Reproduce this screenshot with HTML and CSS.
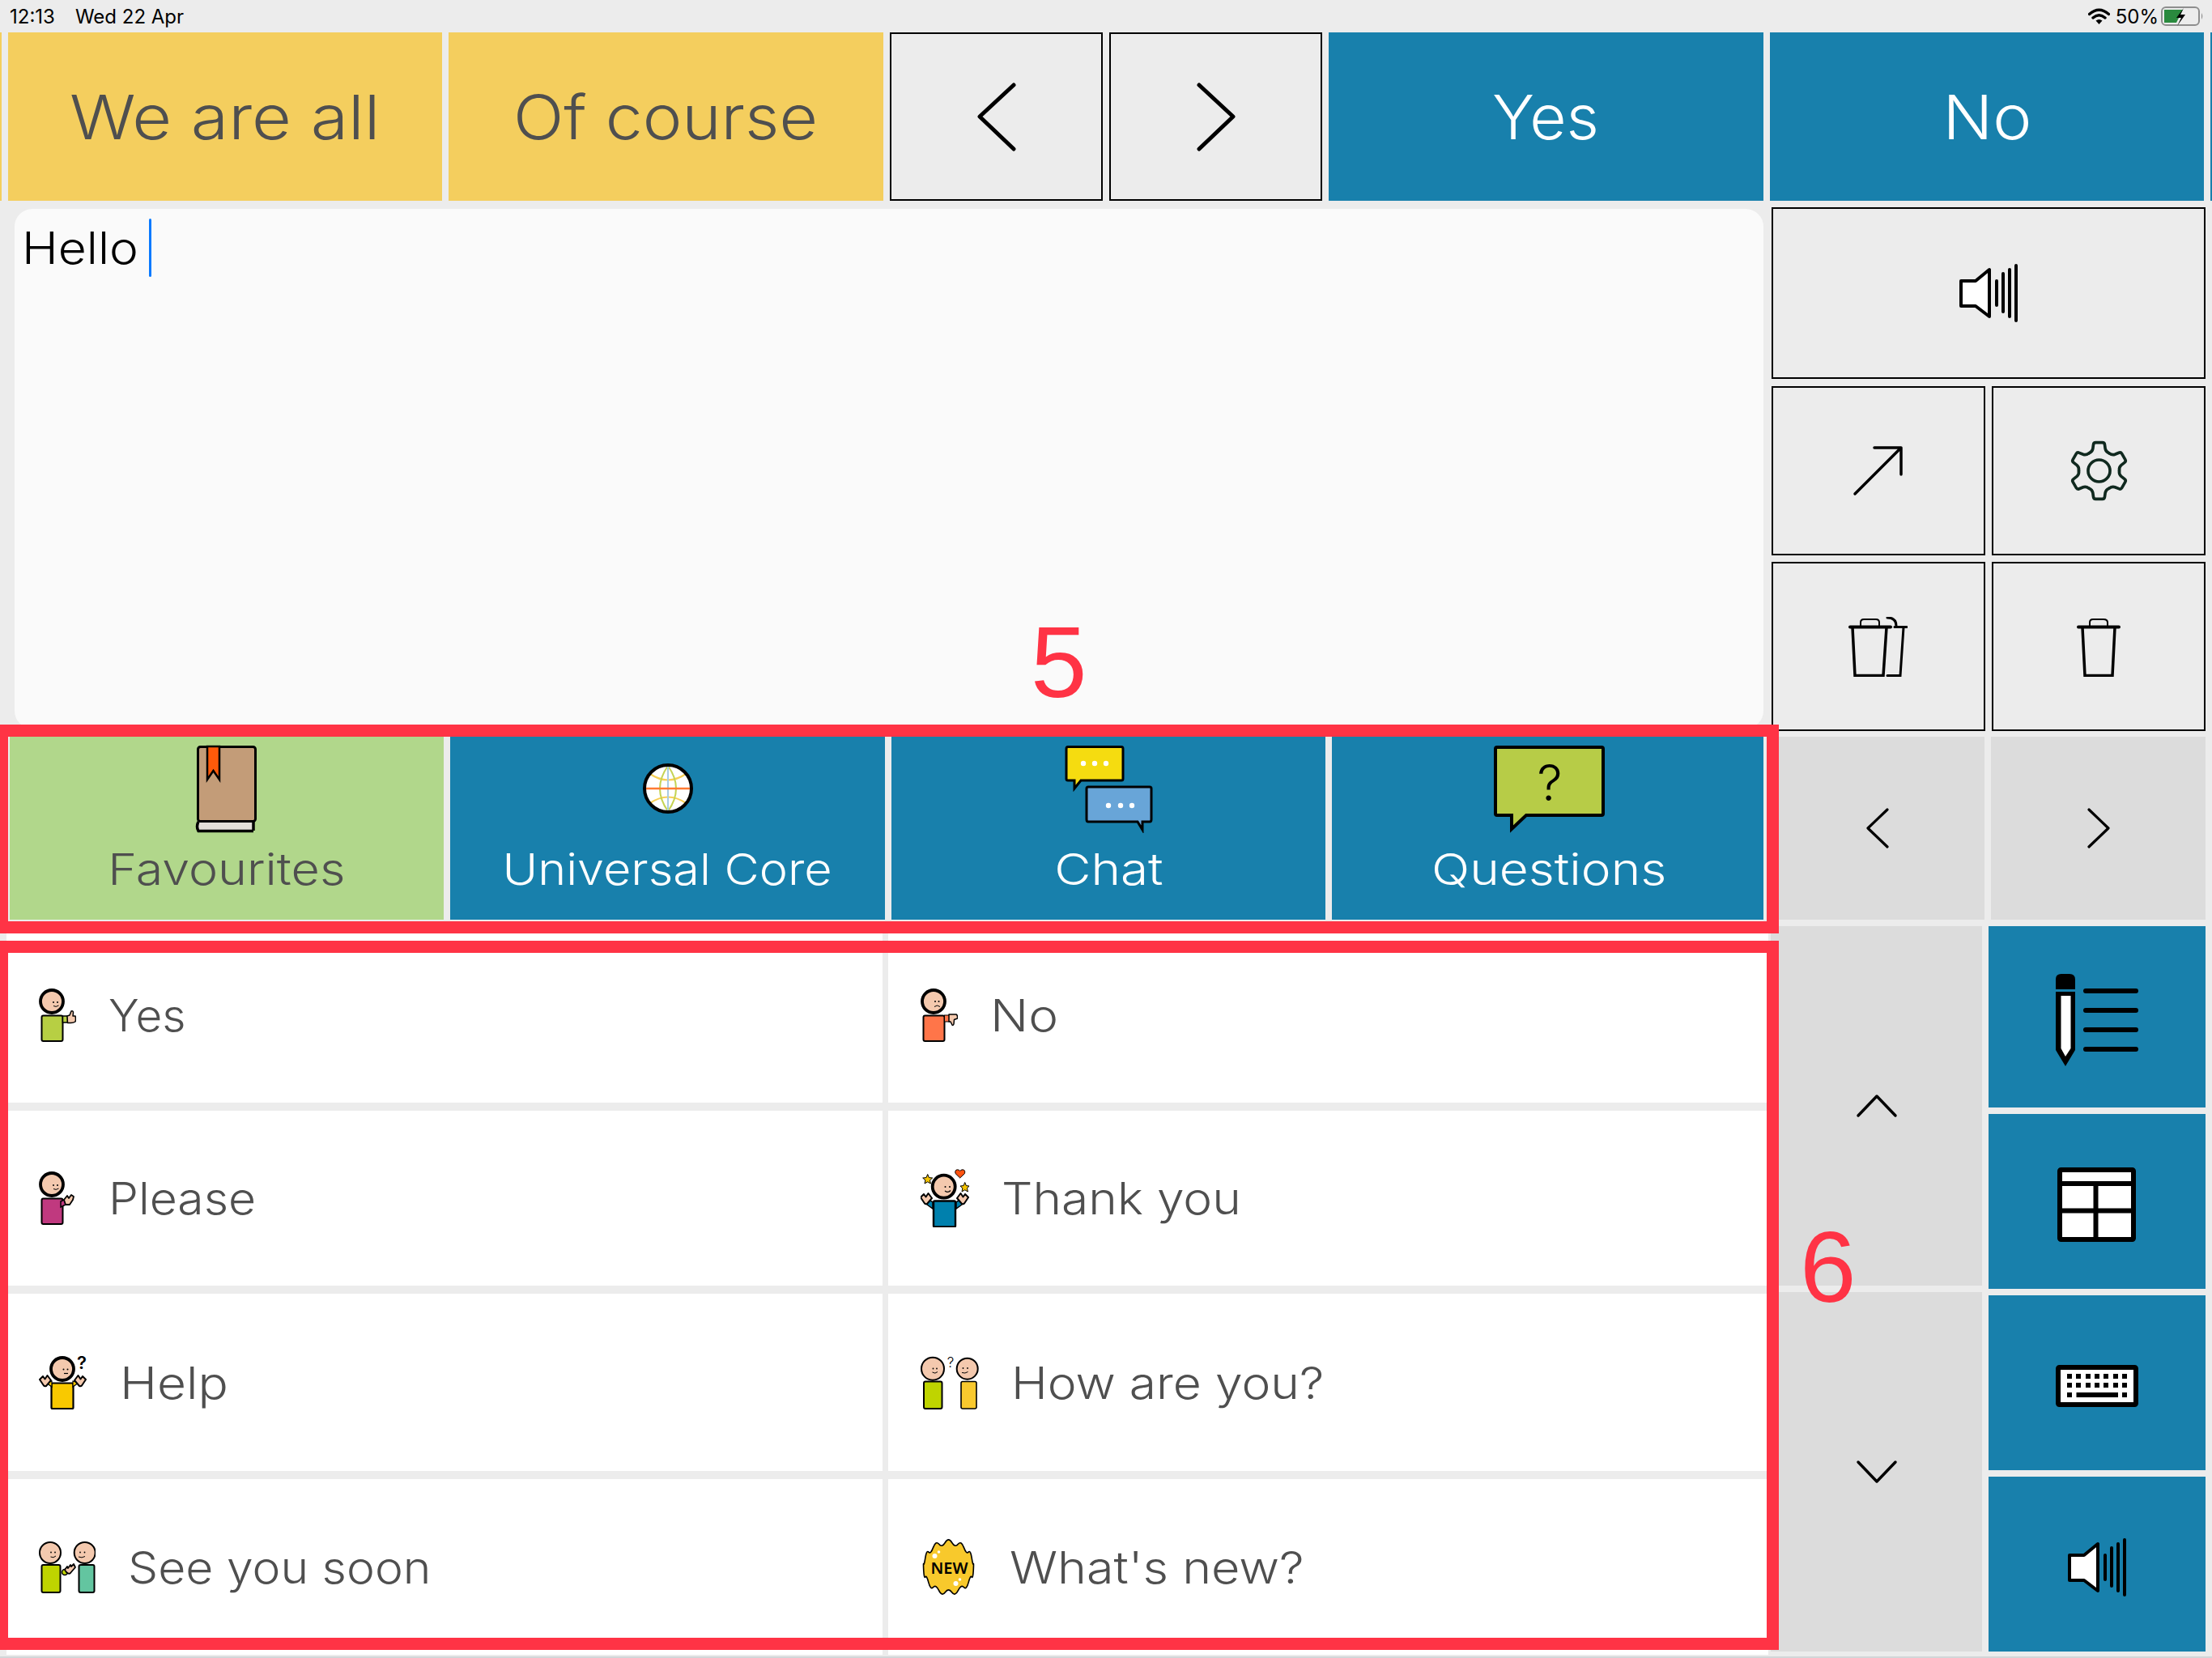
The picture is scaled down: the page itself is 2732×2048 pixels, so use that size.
FILE: index.html
```html
<!DOCTYPE html>
<html lang="en">
<head>
<meta charset="utf-8">
<title>Talk board</title>
<link rel="stylesheet" href="styles.css">
</head>
<body>
<div class="app">
  <header class="status">
    <div class="status-left"><span>12:13</span><span>Wed 22 Apr</span></div>
    <div class="status-right">
      <svg class="wifi" width="27" height="20" viewBox="0 0 27 20"><path d="M1.5 7.5Q13.5-3 25.500 7.500M6 12Q13.500 5.500 21 12" fill="none" stroke="#000" stroke-width="3.400" stroke-linecap="round"/><path d="M9.500 15.500Q13.500 12.500 17.500 15.500L13.500 20Z" fill="#000"/></svg>
      <span>50%</span>
      <svg class="battery" width="53" height="26" viewBox="0 0 53 26"><rect x="1" y="2" width="46" height="22" rx="5" fill="none" stroke="#8e8e8e" stroke-width="2"/><path d="M4 5H27L19 21H4Z" fill="#2a8a3e"/><path d="M28 3L19 15H25L20 25L30 11H24Z" fill="#000"/><path d="M50 9Q52.500 13 50 17Z" fill="#8e8e8e"/></svg>
    </div>
  </header>

  <section class="toprow">
    <div class="sliver sliver-yellow"></div>
    <button class="quick quick-yellow"><span class="sx-111">We are all</span></button>
    <button class="quick quick-yellow"><span class="sx-108">Of course</span></button>
    <button class="quick quick-nav"><svg width="50" height="85" viewBox="0 0 50 85"><path d="M46 3L4 42L46 82" fill="none" stroke="#000" stroke-width="5" stroke-linecap="round" stroke-linejoin="round"/></svg></button>
    <button class="quick quick-nav"><svg width="50" height="85" viewBox="0 0 50 85"><path d="M4 3L46 42L4 82" fill="none" stroke="#000" stroke-width="5" stroke-linecap="round" stroke-linejoin="round"/></svg></button>
    <button class="quick quick-blue"><span class="sx-103">Yes</span></button>
    <button class="quick quick-blue"><span class="sx-107">No</span></button>
    <div class="sliver sliver-blue"></div>
  </section>

  <main class="main">
    <div class="left">
      <div class="editor"><span class="editor-text sx-110">Hello</span><span class="caret"></span></div>

      <nav class="tabs">
        <button class="tab tab-green">
          <span class="tab-icon"><svg width="78" height="110" viewBox="0 0 78 110"><path d="M4 96H72V108H4Z" fill="#e3dfd9"/><path d="M4 96Q1 102 4 107.500H72M72 96V107" fill="none" stroke="#000" stroke-width="3.500"/><rect x="3.500" y="3.500" width="71" height="92" rx="3" fill="#c39c78" stroke="#000" stroke-width="3"/><path d="M15 3V44L22.500 33L30 44V3Z" fill="#ff5a0a" stroke="#000" stroke-width="2.500"/></svg></span>
          <span class="tab-label sx-113">Favourites</span>
        </button>
        <button class="tab tab-blue">
          <span class="tab-icon"><svg width="64" height="66" viewBox="0 0 64 66"><circle cx="32" cy="33" r="29" fill="#fff"/><path d="M10 15Q32 30 54 15M10 51Q32 36 54 51" fill="none" stroke="#f7cf55" stroke-width="2.200"/><path d="M32 5Q12 33 32 61M32 5Q52 33 32 61" fill="none" stroke="#c5d353" stroke-width="2"/><path d="M32 5V61" stroke="#a9cbe3" stroke-width="2"/><path d="M4 33H60" stroke="#ff7a33" stroke-width="2.500"/><circle cx="32" cy="33" r="29" fill="none" stroke="#000" stroke-width="4"/></svg></span>
          <span class="tab-label sx-110">Universal Core</span>
        </button>
        <button class="tab tab-blue">
          <span class="tab-icon"><svg width="112" height="110" viewBox="0 0 112 110"><path d="M6 3.500H72Q74 3.500 74 6V43Q74 45 72 45H22L14 55V45H6Q4 45 4 43V6Q4 3.500 6 3.500Z" fill="#f5dc10" stroke="#000" stroke-width="3"/><g fill="#fff"><circle cx="25" cy="24" r="3.200"/><circle cx="39" cy="24" r="3.200"/><circle cx="53" cy="24" r="3.200"/></g><path d="M31 53H107Q109 53 109 55V93Q109 96 107 96H98V106L92 96H31Q29 96 29 93V55Q29 53 31 53Z" fill="#68a5d8" stroke="#000" stroke-width="3"/><g fill="#fff"><circle cx="56" cy="76" r="3.200"/><circle cx="71" cy="76" r="3.200"/><circle cx="85" cy="76" r="3.200"/></g></svg></span>
          <span class="tab-label sx-115">Chat</span>
        </button>
        <button class="tab tab-blue">
          <span class="tab-icon tab-icon-q"><svg width="142" height="110" viewBox="0 0 142 110"><path d="M6 4H135Q137 4 137 6V86Q137 88 135 88H42L24 105V88H6Q4 88 4 86V6Q4 4 6 4Z" fill="#b7cc47" stroke="#000" stroke-width="4"/><text class="svg-q" x="71" y="70" text-anchor="middle">?</text></svg></span>
          <span class="tab-label tab-label-q sx-115">Questions</span>
        </button>
      </nav>

      <section class="phrases">
        <div class="phrase">
          <svg width="46" height="66" viewBox="0 0 46 66"><rect x="3.500" y="33.500" width="26" height="31.500" rx="2" fill="#b7cf43" stroke="#000" stroke-width="2"/><rect x="29.500" y="34" width="6" height="8" fill="#b7cf43" stroke="#000" stroke-width="1.500"/><path d="M35 34L38 33L40 28Q42.500 27 42.500 30L42 34H45Q46 38 45 41Q42 43 38 42.500H35.500Z" fill="#f4c9ae" stroke="#000" stroke-width="1.500" stroke-linejoin="round"/><circle cx="16" cy="16" r="14" fill="#f4c9ae" stroke="#000" stroke-width="3.800"/><circle cx="18" cy="17" r="1" fill="#000"/><circle cx="23" cy="17" r="1" fill="#000"/><path d="M18 21.500Q21 23.500 24.500 21" fill="none" stroke="#000" stroke-width="1"/></svg>
          <span class="sx-103">Yes</span>
        </div>
        <div class="phrase">
          <svg width="46" height="66" viewBox="0 0 46 66"><rect x="3.500" y="33.500" width="26" height="31.500" rx="2" fill="#ff7549" stroke="#000" stroke-width="2"/><rect x="29.500" y="33" width="6" height="8" fill="#ff7549" stroke="#000" stroke-width="1"/><path d="M35 32H44Q46 33 45.500 37L41.500 38.500L41 44Q39.500 47 38.500 44L37 41H35Z" fill="#f4c9ae" stroke="#000" stroke-width="1.500" stroke-linejoin="round"/><circle cx="16" cy="16" r="14" fill="#f4c9ae" stroke="#000" stroke-width="3.800"/><circle cx="18" cy="16" r="1" fill="#000"/><circle cx="22.500" cy="16" r="1" fill="#000"/><path d="M17 22.500Q20.500 19.500 24 22.500" fill="none" stroke="#000" stroke-width="1"/></svg>
          <span class="sx-113">No</span>
        </div>
        <div class="phrase">
          <svg width="46" height="66" viewBox="0 0 46 66"><rect x="3.500" y="33.500" width="26" height="31.500" rx="2" fill="#c0397f" stroke="#000" stroke-width="2"/><path d="M27 37L33 34V41L27 44Z" fill="#c0397f" stroke="#000" stroke-width="1.500"/><path d="M31 35L35 30L37 33L40 29L43 31L42 35L38 41L33 41Z" fill="#f4c9ae" stroke="#000" stroke-width="1.800" stroke-linejoin="round"/><circle cx="16" cy="16" r="14" fill="#f4c9ae" stroke="#000" stroke-width="3.800"/><circle cx="18" cy="17" r="1" fill="#000"/><circle cx="23" cy="17" r="1" fill="#000"/><path d="M18 21.500Q21 23.500 24.500 21" fill="none" stroke="#000" stroke-width="1"/></svg>
          <span class="sx-107">Please</span>
        </div>
        <div class="phrase">
          <svg width="60" height="72" viewBox="0 0 60 72"><rect x="16" y="39.500" width="27" height="32" rx="1.500" fill="#0080ad" stroke="#000" stroke-width="2.400"/><path d="M8 44L15 49V41L9 37Z" fill="#0080ad" stroke="#000" stroke-width="1.500"/><path d="M51 44L44 49V41L50 37Z" fill="#0080ad" stroke="#000" stroke-width="1.500"/><g fill="#f4c9ae" stroke="#000" stroke-width="2" stroke-linejoin="round"><path transform="translate(7 36)" d="M-7-1L-3-5L-.5-1.500L2.500-6L7 0L1 7Q-1 7.500-2 6.500Z"/><path transform="translate(52 36) scale(-1 1)" d="M-7-1L-3-5L-.5-1.500L2.500-6L7 0L1 7Q-1 7.500-2 6.500Z"/></g><circle cx="28.700" cy="21.700" r="14" fill="#f4c9ae" stroke="#000" stroke-width="3.800"/><circle cx="30.500" cy="22" r="1" fill="#000"/><circle cx="36" cy="22" r="1" fill="#000"/><path d="M30 27Q34 30 37 26.500" fill="none" stroke="#000" stroke-width="1.200"/><g fill="#f5c400" stroke="#000" stroke-width="1"><path d="M8.700 6.500L10.400 10.600L14.700 11L11.500 13.800L12.400 18L8.700 15.800L5 18L5.900 13.800L2.700 11L7 10.600Z"/><path d="M54.700 16.500L56.400 20.600L60 21L57.500 23.800L58.400 28L54.700 25.800L51 28L51.900 23.800L49 21L53 20.600Z"/></g><path d="M48.700 11L43 5.500Q42 1 45.500 .8Q48 .8 48.700 2.500Q49.500 .8 52 .8Q55.500 1 54.500 5.500Z" fill="#ff5310" stroke="#000" stroke-width="1"/></svg>
          <span class="sx-110">Thank you</span>
        </div>
        <div class="phrase">
          <svg width="60" height="82" viewBox="0 -8 60 82"><rect x="15.500" y="33.500" width="27" height="31.500" rx="1.500" fill="#f9c900" stroke="#000" stroke-width="2.200"/><path d="M9 33L16 38V31Z" fill="#f9c900" stroke="#000" stroke-width="1.200"/><path d="M49 33L42 38V31Z" fill="#f9c900" stroke="#000" stroke-width="1.200"/><g fill="#f4c9ae" stroke="#000" stroke-width="2" stroke-linejoin="round"><path transform="translate(8 30)" d="M-7-1L-3-5L-.5-1.500L2.500-6L7 0L1 7Q-1 7.500-2 6.500Z"/><path transform="translate(51 30) scale(-1 1)" d="M-7-1L-3-5L-.5-1.500L2.500-6L7 0L1 7Q-1 7.500-2 6.500Z"/></g><circle cx="29" cy="16" r="14" fill="#f4c9ae" stroke="#000" stroke-width="3.800"/><circle cx="30.500" cy="16.500" r="1" fill="#000"/><circle cx="35.500" cy="16.500" r="1" fill="#000"/><path d="M31 21.500H36" stroke="#000" stroke-width="1.200"/><text class="svg-mark" x="53" y="16" text-anchor="middle">?</text></svg>
          <span class="sx-113">Help</span>
        </div>
        <div class="phrase">
          <svg width="72" height="82" viewBox="0 -8 72 82"><rect x="4" y="31.500" width="22.500" height="33.500" rx="2" fill="#bfd400" stroke="#000" stroke-width="2"/><rect x="50" y="31.500" width="19" height="33.500" rx="2" fill="#f9c92e" stroke="#000" stroke-width="1.600"/><circle cx="15" cy="15.700" r="14" fill="#f4c9ae" stroke="#000" stroke-width="2"/><circle cx="57.700" cy="15.700" r="13" fill="#f4c9ae" stroke="#000" stroke-width="2"/><circle cx="15.500" cy="15.500" r=".9" fill="#000"/><circle cx="20" cy="15.500" r=".9" fill="#000"/><path d="M14.500 20Q18 22.500 21 19.500" fill="none" stroke="#000" stroke-width="1"/><circle cx="52.500" cy="15" r=".9" fill="#000"/><circle cx="58" cy="15" r=".9" fill="#000"/><path d="M51 20.500Q55 22 58.500 19.500" fill="none" stroke="#000" stroke-width="1"/><text class="svg-mark-thin" x="37" y="14" text-anchor="middle">?</text></svg>
          <span class="sx-110">How are you?</span>
        </div>
        <div class="phrase">
          <svg width="70" height="64" viewBox="0 0 70 64"><rect x="3.500" y="29" width="23" height="34" rx="2" fill="#bfd400" stroke="#000" stroke-width="2"/><rect x="49.500" y="29" width="19" height="34" rx="2" fill="#63c5a0" stroke="#000" stroke-width="2"/><circle cx="14" cy="14" r="13" fill="#f4c9ae" stroke="#000" stroke-width="2"/><circle cx="56.700" cy="14" r="13" fill="#f4c9ae" stroke="#000" stroke-width="2"/><circle cx="15" cy="13.500" r=".9" fill="#000"/><circle cx="20" cy="13.500" r=".9" fill="#000"/><path d="M14.500 19Q18 21 21 18" fill="none" stroke="#000" stroke-width="1"/><circle cx="51" cy="13.500" r=".9" fill="#000"/><circle cx="56.500" cy="13.500" r=".9" fill="#000"/><path d="M49 19Q53 21 57 18.500" fill="none" stroke="#000" stroke-width="1"/><circle cx="32" cy="38" r="3.500" fill="#bfd400" stroke="#000" stroke-width="1.500"/><path transform="translate(38 32)" d="M-6 3L-3-1L-2 1L1-3L2-1L5-4L7 0L1 7Q-1 9-4 6Z" fill="#f4c9ae" stroke="#000" stroke-width="1.800" stroke-linejoin="round"/></svg>
          <span class="sx-107">See you soon</span>
        </div>
        <div class="phrase">
          <svg width="70" height="72" viewBox="0 -1 70 72"><g transform="translate(34.500 35)"><path d="M-4.050-30.730Q0-37.500 4.050-30.730T11.860-28.640T18.870-24.600T24.600-18.870T28.640-11.860T30.730-4.050T30.730 4.050T28.640 11.860T24.600 18.870T18.870 24.600T11.860 28.640T4.050 30.730T-4.050 30.730T-11.860 28.640T-18.870 24.600T-24.600 18.870T-28.640 11.860T-30.730 4.050T-30.730-4.050T-28.640-11.860T-24.600-18.870T-18.870-24.600T-11.860-28.640T-4.050-30.730Z" fill="#f8c92c" stroke="#000" stroke-width="1.600" stroke-linejoin="round"/><g fill="#fff"><circle cx="-17" cy="-14" r="3"/><circle cx="-12" cy="-19" r="1.800"/><circle cx="9" cy="20" r="3"/><circle cx="14" cy="15" r="1.800"/></g><text class="svg-new" x="1" y="8" text-anchor="middle">NEW</text></g></svg>
          <span class="sx-111">What's new?</span>
        </div>
      </section>
    </div>

    <aside class="right">
      <button class="tool tool-speak"><svg width="76" height="72" viewBox="0 0 76 72"><path d="M4 21H22L39 7V65L22 52H4Z" fill="#fff" stroke="#000" stroke-width="4" stroke-linejoin="round"/><path d="M48 21V51M56 12V59M64 7V65M72 2V70" fill="none" stroke="#000" stroke-width="4" stroke-linecap="round"/></svg></button>
      <div class="tool-grid">
        <button class="tool"><svg width="64" height="64" viewBox="0 0 64 64"><path d="M3 60L60 3M27 3H60V36" fill="none" stroke="#000" stroke-width="3.500" stroke-linecap="round" stroke-linejoin="round"/></svg></button>
        <button class="tool"><svg width="75" height="75" viewBox="0 0 72 72"><g fill="none" stroke="#10291f" stroke-width="3.500" stroke-linecap="round" stroke-linejoin="round"><circle cx="36" cy="36" r="13"/><path d="M24 15.200Q28 13.500 28.600 10L29.300 5Q29.600 2.500 32 2.500H40Q42.400 2.500 42.700 5L43.400 10Q44 13.500 48 15.200"/><path transform="rotate(60 36 36)" d="M24 15.200Q28 13.500 28.600 10L29.300 5Q29.600 2.500 32 2.500H40Q42.400 2.500 42.700 5L43.400 10Q44 13.500 48 15.200"/><path transform="rotate(120 36 36)" d="M24 15.200Q28 13.500 28.600 10L29.300 5Q29.600 2.500 32 2.500H40Q42.400 2.500 42.700 5L43.400 10Q44 13.500 48 15.200"/><path transform="rotate(180 36 36)" d="M24 15.200Q28 13.500 28.600 10L29.300 5Q29.600 2.500 32 2.500H40Q42.400 2.500 42.700 5L43.400 10Q44 13.500 48 15.200"/><path transform="rotate(240 36 36)" d="M24 15.200Q28 13.500 28.600 10L29.300 5Q29.600 2.500 32 2.500H40Q42.400 2.500 42.700 5L43.400 10Q44 13.500 48 15.200"/><path transform="rotate(300 36 36)" d="M24 15.200Q28 13.500 28.600 10L29.300 5Q29.600 2.500 32 2.500H40Q42.400 2.500 42.700 5L43.400 10Q44 13.500 48 15.200"/></g></svg></button>
        <button class="tool tool-shift"><svg width="74" height="74" viewBox="0 0 74 74"><path d="M16 12V7Q16 3 20 3H35Q39 3 39 7V12" fill="none" stroke="#000" stroke-width="2"/><path d="M3 12.500H53" fill="none" stroke="#000" stroke-width="4" stroke-linecap="round"/><path d="M6 13L9 72.500H44L48 13" fill="none" stroke="#000" stroke-width="3.500"/><path d="M49 1Q60 1 60 11M58 12.500H73M69 13L65 72.500H49" fill="none" stroke="#000" stroke-width="3" stroke-linecap="round"/></svg></button>
        <button class="tool"><svg width="54" height="74" viewBox="0 0 54 74"><path d="M16 12V7Q16 3 20 3H33Q38 3 38 7V12" fill="none" stroke="#000" stroke-width="2"/><path d="M2 12.500H52" fill="none" stroke="#000" stroke-width="4" stroke-linecap="round"/><path d="M7 13L10 72.500H44L47 13" fill="none" stroke="#000" stroke-width="3.500"/></svg></button>
      </div>
      <div class="nav-grid">
        <button class="nav-cell"><svg width="30" height="50" viewBox="0 0 30 50"><path d="M27 2L3 25L27 48" fill="none" stroke="#000" stroke-width="3.200" stroke-linecap="round" stroke-linejoin="round"/></svg></button>
        <button class="nav-cell"><svg width="30" height="50" viewBox="0 0 30 50"><path d="M3 2L27 25L3 48" fill="none" stroke="#000" stroke-width="3.200" stroke-linecap="round" stroke-linejoin="round"/></svg></button>
      </div>
      <div class="lower">
        <div class="scroll-col">
          <button class="nav-cell"><svg width="52" height="30" viewBox="0 0 52 30"><path d="M3 27L26 3L49 27" fill="none" stroke="#000" stroke-width="3.500" stroke-linecap="round" stroke-linejoin="round"/></svg></button>
          <button class="nav-cell"><svg width="52" height="30" viewBox="0 0 52 30"><path d="M3 3L26 27L49 3" fill="none" stroke="#000" stroke-width="3.500" stroke-linecap="round" stroke-linejoin="round"/></svg></button>
        </div>
        <div class="mode-col">
          <button class="mode mode-low"><svg width="104" height="116" viewBox="0 0 104 116"><path d="M1 20V8Q1 1 8 1H18Q25 1 25 8V20Z" fill="#000"/><path d="M1 23H25V95L13 115L1 95Z" fill="#000"/><path d="M7.500 28H19.500V93L13 103L7.500 93Z" fill="#fff"/><path d="M38 22H100M38 46H100M38 70H100M38 94H100" stroke="#000" stroke-width="6" stroke-linecap="round"/></svg></button>
          <button class="mode mode-low"><svg width="98" height="92" viewBox="0 0 98 92"><rect x="3" y="3" width="91" height="86" rx="1.500" fill="#fff" stroke="#000" stroke-width="6"/><path d="M3 20H95M3 53.500H95M47.500 20V89" stroke="#000" stroke-width="6"/></svg></button>
          <button class="mode mode-low"><svg width="102" height="52" viewBox="0 0 102 52"><rect x="3" y="3" width="96" height="46" rx="1.500" fill="#fff" stroke="#000" stroke-width="6"/><g fill="#000"><rect x="14" y="11" width="6" height="6"/><rect x="25" y="11" width="6" height="6"/><rect x="37" y="11" width="6" height="6"/><rect x="48" y="11" width="6" height="6"/><rect x="59" y="11" width="6" height="6"/><rect x="71" y="11" width="6" height="6"/><rect x="82" y="11" width="6" height="6"/><rect x="14" y="22" width="6" height="6"/><rect x="25" y="22" width="6" height="6"/><rect x="37" y="22" width="6" height="6"/><rect x="48" y="22" width="6" height="6"/><rect x="59" y="22" width="6" height="6"/><rect x="71" y="22" width="6" height="6"/><rect x="82" y="22" width="6" height="6"/><rect x="14" y="34" width="6" height="6"/><rect x="25.500" y="34" width="51.500" height="6"/><rect x="82" y="34" width="6" height="6"/></g></svg></button>
          <button class="mode mode-low"><svg width="76" height="72" viewBox="0 0 76 72"><path d="M4 21H22L39 7V65L22 52H4Z" fill="#fff" stroke="#000" stroke-width="4" stroke-linejoin="round"/><path d="M48 21V51M56 12V59M64 7V65M72 2V70" fill="none" stroke="#000" stroke-width="4" stroke-linecap="round"/></svg></button>
        </div>
      </div>
    </aside>
  </main>
  <div class="home-line"></div>

  <div class="frame frame-five"></div>
  <div class="frame frame-six"></div>
  <div class="mark mark-five">5</div>
  <div class="mark mark-six">6</div>
</div>
</body>
</html>
```
FILE: styles.css
```css
* { box-sizing: border-box; }
html, body { margin: 0; padding: 0; }
body { background: #ececec; font-family: Inter, "Liberation Sans", sans-serif; }
button { border: 0; padding: 0; margin: 0; font: inherit; display: flex; align-items: center; justify-content: center; }
svg { display: block; flex: none; }

/* Montserrat is not installed: Inter Light is widened per label to the reference's glyph widths */
.sx-103 { transform: scaleX(1.03); }
.sx-107 { transform: scaleX(1.07); }
.sx-108 { transform: scaleX(1.08); }
.sx-110 { transform: scaleX(1.10); }
.sx-111 { transform: scaleX(1.11); }
.sx-113 { transform: scaleX(1.13); }
.sx-115 { transform: scaleX(1.15); }

.app { position: relative; width: 2732px; height: 2048px; overflow: hidden; background: #ececec; }

.status { height: 40px; display: flex; align-items: center; justify-content: space-between; padding: 0 10px 0 12px; font-size: 24px; color: #000; }
.status-left { display: flex; gap: 25px; }
.status-right { display: flex; align-items: center; gap: 3px; }
.wifi { margin-right: 4px; }

.toprow { height: 208px; display: grid; grid-template-columns: 2px 536px 537px 263px 263px 537px 536px 2px; column-gap: 8px; }
.sliver-yellow { background: #f4ce5e; }
.sliver-blue { background: #1880ac; }
.quick { font-size: 76px; font-weight: 300; }
.quick-yellow { background: #f4ce5e; color: #4f4f4f; }
.quick-blue { background: #1880ac; color: #fff; }
.quick-nav { background: #ececec; border: 2px solid #000; }

.main { height: 1798px; display: flex; }
.left { width: 2187px; display: flex; flex-direction: column; }
.editor { margin: 10px 9px 0 18px; height: 642px; background: #fafafa; border-radius: 22px; padding: 12px 0 0 9px; display: flex; align-items: flex-start; }
.editor-text { font-size: 55px; font-weight: 300; line-height: 72px; color: #000; transform-origin: left center; }
.caret { width: 3px; height: 72px; margin-left: 26px; background: #0a7aff; border-radius: 2px; }

.tabs { margin: 10px 9px 0 12px; height: 226px; display: grid; grid-template-columns: 536px 537px 536px 533px; column-gap: 8px; }
.tab { flex-direction: column; justify-content: flex-start; padding-top: 9px; }
.tab-green { background: #b1d78b; color: #4f4f4f; }
.tab-blue { background: #1880ac; color: #fff; }
.tab-icon { height: 110px; display: flex; align-items: center; justify-content: center; }
.tab-icon-q { margin-left: 4px; }
.tab-label { font-size: 54px; font-weight: 300; line-height: 60px; margin-top: 15px; }
.tab-label-q { margin-left: 3px; }

.phrases { margin: 10px 3px 0 8px; height: 898px; display: grid; grid-template-columns: 1082px 1087px; column-gap: 7px; grid-template-rows: 216px 216px 219px 217px; row-gap: 10px; }
.phrase { background: #fff; display: flex; align-items: center; gap: 40px; padding-left: 40px; font-size: 55px; font-weight: 300; color: #4f4f4f; }
.phrase span { transform-origin: left center; }

.right { width: 537px; display: flex; flex-direction: column; padding-top: 8px; }
.tool { background: #ececec; border: 2px solid #000; }
.tool-shift { padding-right: 2px; }
.tool-speak { height: 212px; margin-left: 1px; }
.tool-grid { margin: 9px 0 0 1px; display: grid; grid-template-columns: 264px 264px; grid-template-rows: 209px 209px; gap: 8px; }
.nav-grid { margin-top: 7px; height: 226px; display: grid; grid-template-columns: 264px 265px; column-gap: 8px; }
.nav-cell { background: #dcdcdc; }
.lower { margin-top: 8px; display: flex; gap: 8px; }
.scroll-col { width: 261px; height: 896px; display: grid; grid-template-rows: 444px 444px; row-gap: 8px; }
.mode-col { width: 268px; display: grid; grid-template-rows: 224px 216px 216px 216px; row-gap: 8px; }
.mode { background: #1880ac; }
.mode-low { padding-top: 8px; }

.home-line { height: 2px; background: #d2d6d8; }

.frame { position: absolute; left: -5px; width: 2202px; border: 15px solid #ff3345; }
.frame-five { top: 895px; height: 258px; }
.frame-six { top: 1162px; height: 876px; }
.mark { position: absolute; font-family: "Liberation Sans", Arial, sans-serif; font-size: 125px; line-height: 125px; color: #ff3345; }
.mark-five { left: 1273px; top: 755px; }
.mark-six { left: 2223px; top: 1502px; }

.svg-q { font-family: Inter, sans-serif; font-size: 62px; font-weight: 300; fill: #000; }
.svg-mark { font-family: Inter, sans-serif; font-size: 22px; font-weight: 600; fill: #000; }
.svg-mark-thin { font-family: Inter, sans-serif; font-size: 17px; font-weight: 300; fill: #000; }
.svg-new { font-family: "Noto Sans", sans-serif; font-size: 20px; font-weight: 600; fill: #000; }
```
